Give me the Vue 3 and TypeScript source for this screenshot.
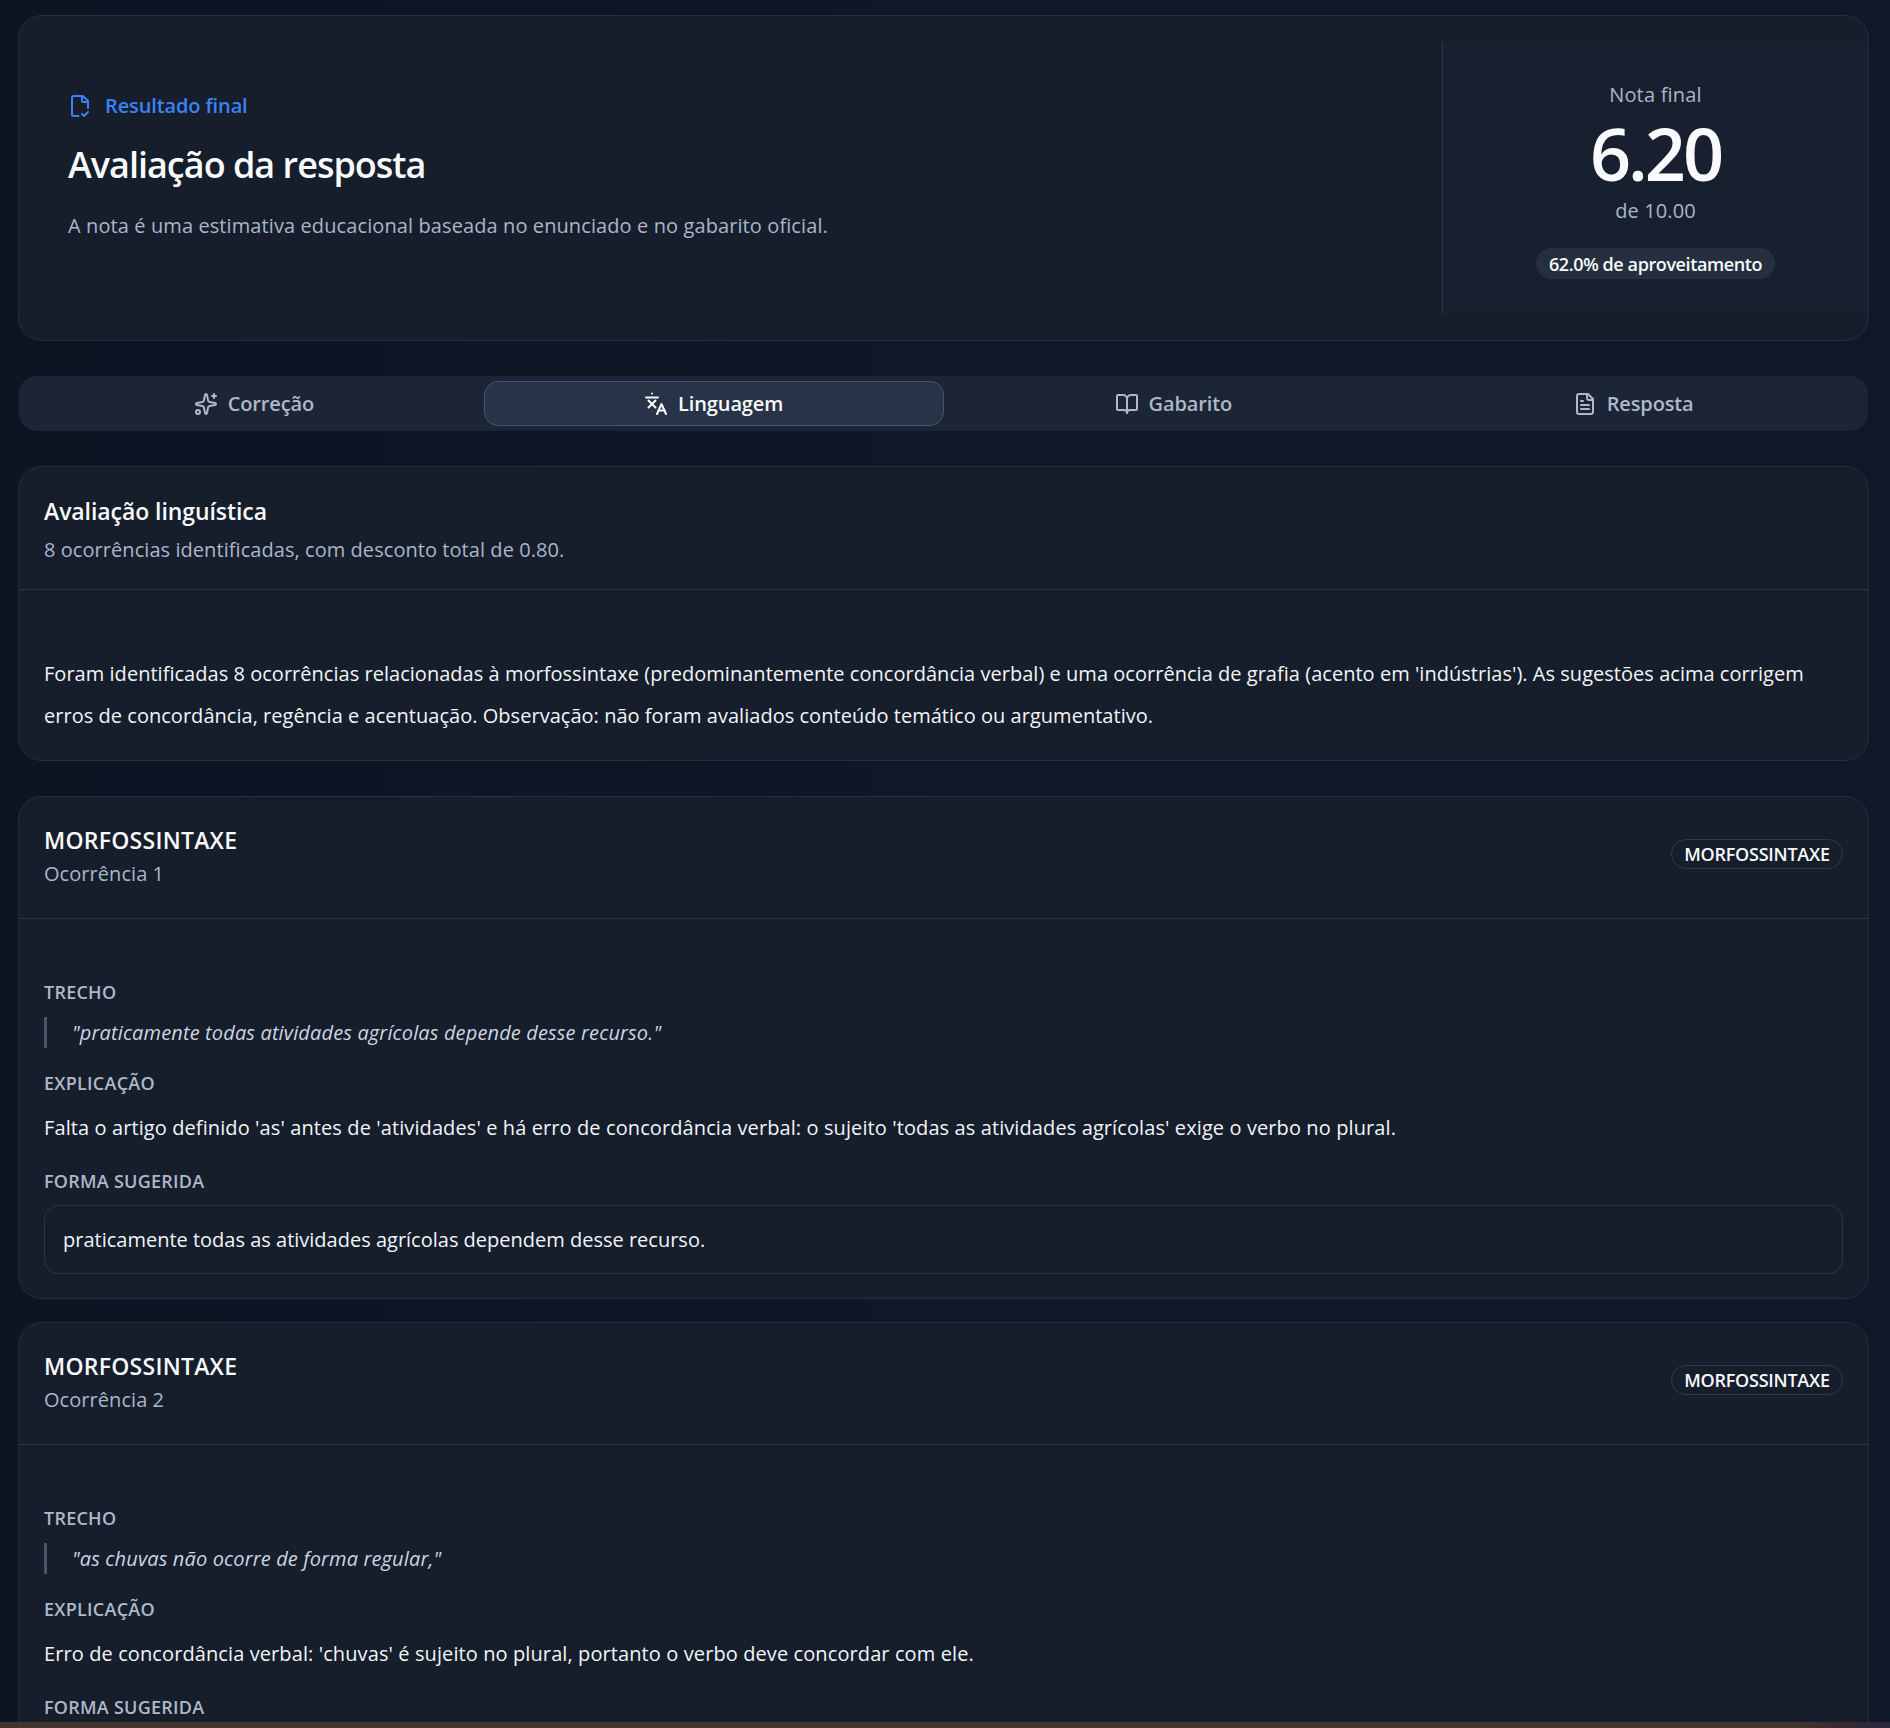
<script setup lang="ts">
interface Occurrence {
  n: number
  trecho: string
  explicacao: string
  sugerida: string
}
const occurrences: Occurrence[] = [
  {
    n: 1,
    trecho: '"praticamente todas atividades agrícolas depende desse recurso."',
    explicacao:
      "Falta o artigo definido 'as' antes de 'atividades' e há erro de concordância verbal: o sujeito 'todas as atividades agrícolas' exige o verbo no plural.",
    sugerida: 'praticamente todas as atividades agrícolas dependem desse recurso.',
  },
  {
    n: 2,
    trecho: '"as chuvas não ocorre de forma regular,"',
    explicacao:
      "Erro de concordância verbal: 'chuvas' é sujeito no plural, portanto o verbo deve concordar com ele.",
    sugerida: 'as chuvas não ocorrem de forma regular,',
  },
]
</script>

<template>
  <div class="page">
    <main class="content">
      <section class="card hero">
        <div class="hero-main">
          <div class="eyebrow">
            <svg class="icon" viewBox="0 0 24 24"><path d="M10.5 22H6a2 2 0 0 1-2-2V4a2 2 0 0 1 2-2h8a2.4 2.4 0 0 1 1.706.706l3.588 3.588A2.4 2.4 0 0 1 20 8v6" /><path d="M14 2v5a1 1 0 0 0 1 1h5" /><path d="m14 20 2 2 4-4" /></svg>
            <span>Resultado final</span>
          </div>
          <h1>Avaliação da resposta</h1>
          <p class="lead">A nota é uma estimativa educacional baseada no enunciado e no gabarito oficial.</p>
        </div>
        <aside class="score">
          <div class="score-label">Nota final</div>
          <div class="score-value">6.20</div>
          <div class="score-max">de 10.00</div>
          <div class="score-pill">62.0% de aproveitamento</div>
        </aside>
      </section>

      <nav class="tabs">
        <div class="tab">
          <svg class="icon" viewBox="0 0 24 24"><path d="M11.017 2.814a1 1 0 0 1 1.966 0l1.051 5.558a2 2 0 0 0 1.594 1.594l5.558 1.051a1 1 0 0 1 0 1.966l-5.558 1.051a2 2 0 0 0-1.594 1.594l-1.051 5.558a1 1 0 0 1-1.966 0l-1.051-5.558a2 2 0 0 0-1.594-1.594l-5.558-1.051a1 1 0 0 1 0-1.966l5.558-1.051a2 2 0 0 0 1.594-1.594z" /><path d="M20 2v4" /><path d="M22 4h-4" /><circle cx="4" cy="20" r="2" /></svg>
          <span>Correção</span>
        </div>
        <div class="tab active">
          <svg class="icon" viewBox="0 0 24 24"><path d="M8 1.5h.01" /><path d="M2 5.5h12" /><path d="m4.5 8.5 7 7" /><path d="m11.5 8.5-7 7" /><path d="m22 22-4.5-10-4.5 10" /><path d="M14.5 18.5h6" /></svg>
          <span>Linguagem</span>
        </div>
        <div class="tab">
          <svg class="icon" viewBox="0 0 24 24"><path d="M12 7v14" /><path d="M3 18a1 1 0 0 1-1-1V4a1 1 0 0 1 1-1h5a4 4 0 0 1 4 4 4 4 0 0 1 4-4h5a1 1 0 0 1 1 1v13a1 1 0 0 1-1 1h-6a3 3 0 0 0-3 3 3 3 0 0 0-3-3z" /></svg>
          <span>Gabarito</span>
        </div>
        <div class="tab">
          <svg class="icon" viewBox="0 0 24 24"><path d="M15 2H6a2 2 0 0 0-2 2v16a2 2 0 0 0 2 2h12a2 2 0 0 0 2-2V7Z" /><path d="M14 2v4a2 2 0 0 0 2 2h4" /><path d="M10 9H8" /><path d="M16 13H8" /><path d="M16 17H8" /></svg>
          <span>Resposta</span>
        </div>
      </nav>

      <section class="card summary">
        <header class="summary-head">
          <h2>Avaliação linguística</h2>
          <p class="muted">8 ocorrências identificadas, com desconto total de 0.80.</p>
        </header>
        <p class="summary-body">Foram identificadas 8 ocorrências relacionadas à morfossintaxe (predominantemente concordância verbal) e uma ocorrência de grafia (acento em 'indústrias'). As sugestões acima corrigem erros de concordância, regência e acentuação. Observação: não foram avaliados conteúdo temático ou argumentativo.</p>
      </section>

      <section v-for="o in occurrences" :key="o.n" class="card occ">
        <header class="occ-head">
          <div>
            <h3>MORFOSSINTAXE</h3>
            <p class="muted">Ocorrência {{ o.n }}</p>
          </div>
          <span class="badge">MORFOSSINTAXE</span>
        </header>
        <div class="occ-body">
          <div class="label">TRECHO</div>
          <blockquote>{{ o.trecho }}</blockquote>
          <div class="label">EXPLICAÇÃO</div>
          <p class="explain">{{ o.explicacao }}</p>
          <div class="label">FORMA SUGERIDA</div>
          <div class="suggest">{{ o.sugerida }}</div>
        </div>
      </section>
    </main>
    <div class="strip"></div>
  </div>
</template>

<style>
html, body { margin: 0; background: #0f1726; overflow: hidden; }
</style>

<style scoped>
* { box-sizing: border-box; }
.page {
  width: 1890px;
  height: 1728px;
  display: flex;
  flex-direction: column;
  overflow: hidden;
  font-family: "Open Sans", "Noto Sans", sans-serif;
  color: #f8fafc;
  background: linear-gradient(90deg, #0d1422 0%, #0f1728 50%, #0f1829 100%);
}
.content {
  flex: 1;
  min-height: 0;
  overflow: hidden;
  padding: 15px 21px 0 18px;
  display: flex;
  flex-direction: column;
}
.card {
  flex: none;
  background: #161d2b;
  border: 1px solid #262e3d;
  border-radius: 24px;
}
.icon {
  width: 24px;
  height: 24px;
  flex: none;
  fill: none;
  stroke: currentColor;
  stroke-width: 2;
  stroke-linecap: round;
  stroke-linejoin: round;
}
.hero {
  height: 326px;
  padding: 26px 0;
  display: flex;
}
.hero-main {
  flex: 1;
  padding: 49px 0 0 49px;
}
.eyebrow {
  display: flex;
  align-items: center;
  gap: 13px;
  color: #3b82f6;
  font-size: 20px;
  font-weight: 600;
  letter-spacing: -0.12px;
  line-height: 30px;
}
h1 {
  margin: 21px 0 0;
  font-size: 36px;
  font-weight: 600;
  line-height: 46px;
  letter-spacing: -1px;
  color: #f8fafc;
}
.lead {
  margin: 22px 0 0;
  font-size: 20px;
  line-height: 32px;
  letter-spacing: 0.1px;
  color: #aab6c9;
}
.score {
  width: 426px;
  flex: none;
  background: #182030;
  border-left: 1px solid #2c3648;
  display: flex;
  flex-direction: column;
  align-items: center;
  padding-top: 38px;
}
.score-label {
  font-size: 20px;
  line-height: 30px;
  letter-spacing: 0.2px;
  color: #aab6c9;
}
.score-value {
  font-size: 72px;
  font-weight: 600;
  line-height: 86px;
  letter-spacing: -3px;
  color: #f8fafc;
}
.score-max {
  font-size: 20px;
  line-height: 29px;
  letter-spacing: 0.1px;
  color: #aab6c9;
}
.score-pill {
  margin-top: 23px;
  width: 239px;
  height: 31px;
  border-radius: 16px;
  background: #252f40;
  display: flex;
  align-items: center;
  justify-content: center;
  font-size: 18px;
  font-weight: 600;
  letter-spacing: -0.4px;
  white-space: nowrap;
  color: #f8fafc;
}
.tabs {
  flex: none;
  margin: 35px 1px 0;
  height: 55px;
  padding: 5px;
  border-radius: 18px;
  background: #1c2535;
  display: grid;
  grid-template-columns: repeat(4, 1fr);
}
.tab {
  display: flex;
  align-items: center;
  justify-content: center;
  gap: 10px;
  font-size: 20px;
  font-weight: 600;
  letter-spacing: -0.12px;
  color: #aeb8c9;
  border: 1px solid transparent;
  border-radius: 14px;
}
.tab.active {
  background: #283347;
  border-color: #46546c;
  color: #f8fafc;
}
.summary {
  margin-top: 35px;
  height: 295px;
}
.summary-head {
  height: 123px;
  padding: 28px 25px 0;
  border-bottom: 1px solid #2c3648;
}
h2 {
  margin: 0;
  font-size: 23px;
  font-weight: 600;
  line-height: 32px;
  letter-spacing: -0.07px;
  color: #f8fafc;
}
.muted {
  margin: 3px 0 0;
  font-size: 20px;
  line-height: 30px;
  letter-spacing: 0.06px;
  color: #aab6c9;
}
.summary-head .muted { margin-top: 8px; }
.summary-body {
  margin: 0;
  padding: 63px 25px 0;
  font-size: 20px;
  line-height: 41.5px;
  letter-spacing: 0.03px;
  color: #f1f5f9;
}
.occ { margin-top: 23px; }
.summary + .occ { margin-top: 35px; }
.occ-head {
  height: 122px;
  padding: 27px 25px 0;
  border-bottom: 1px solid #2c3648;
  display: flex;
  justify-content: space-between;
  align-items: flex-start;
}
h3 {
  margin: 0;
  font-size: 23px;
  font-weight: 600;
  line-height: 32px;
  letter-spacing: 0.25px;
  color: #f8fafc;
}
.badge {
  margin-top: 15px;
  height: 30px;
  width: 172px;
  border: 1px solid #2d3a50;
  border-radius: 15px;
  display: flex;
  align-items: center;
  justify-content: center;
  font-size: 18px;
  font-weight: 600;
  letter-spacing: -0.25px;
  color: #f8fafc;
}
.occ-body {
  padding: 60px 25px 24px;
}
.label {
  font-size: 18px;
  font-weight: 600;
  line-height: 26px;
  letter-spacing: 0.25px;
  color: #aeb8c9;
}
blockquote {
  margin: 12px 0 22px;
  height: 31px;
  padding-left: 25px;
  border-left: 3px solid #475569;
  font-style: italic;
  font-size: 20px;
  line-height: 31px;
  letter-spacing: 0.14px;
  color: #cbd5e1;
}
.explain {
  margin: 14px 0 23px;
  font-size: 20px;
  line-height: 35px;
  letter-spacing: 0.1px;
  color: #f1f5f9;
}
.suggest {
  margin-top: 11px;
  height: 69px;
  padding: 0 18px;
  display: flex;
  align-items: center;
  border: 1px solid #2c3648;
  border-radius: 14px;
  font-size: 20px;
  color: #f1f5f9;
}
.strip {
  flex: none;
  height: 6px;
  background: linear-gradient(90deg, #40362f 0%, #40362f 95%, #3a2a30 97%, #2b2740 100%);
}
</style>
